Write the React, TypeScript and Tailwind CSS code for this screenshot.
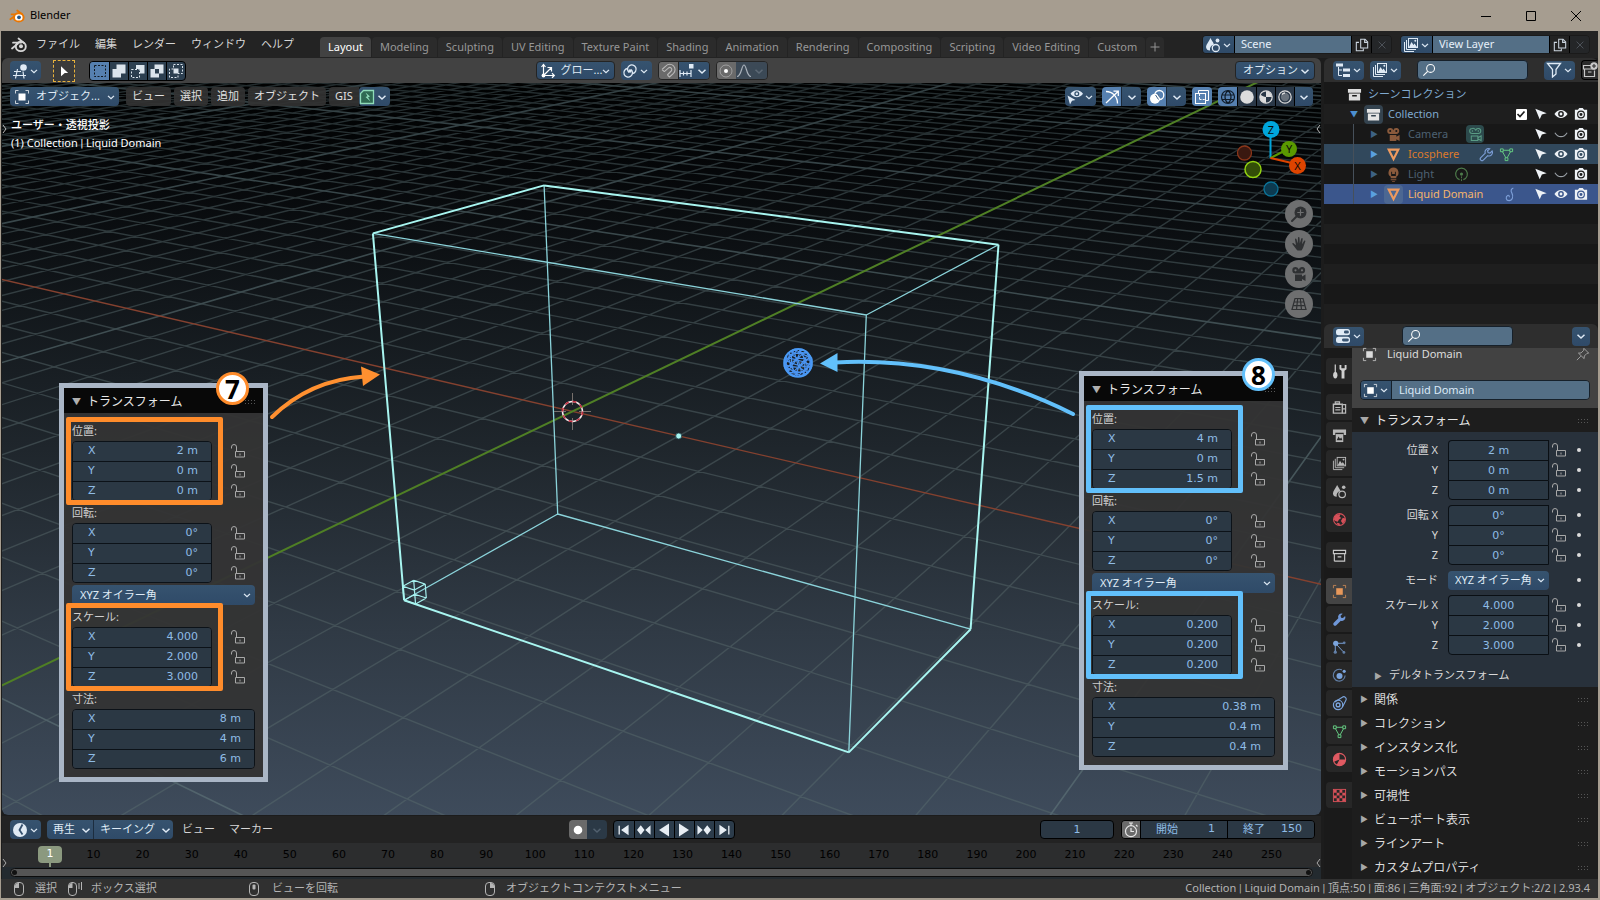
import React from "react";
import type { ReactNode } from "react";

/* ------------------------------------------------------------------ */
/* Camera and scene geometry                                           */
/* ------------------------------------------------------------------ */

type Vec3 = [number, number, number];
type Pt = [number, number];

const CAMERA = [
  [37.629, 58.012, -11.218, 572.423],
  [2.301, -5.006, -66.449, 411.376],
  [-0.022897, 0.033316, -0.015793, 1],
];

const row = (r: number[], p: Vec3) => r[0] * p[0] + r[1] * p[1] + r[2] * p[2] + r[3];
const project = (p: Vec3): Pt => {
  const w = row(CAMERA[2], p);
  return [row(CAMERA[0], p) / w, row(CAMERA[1], p) / w];
};

function floorLine(axis: "x" | "y", k: number): [Pt, Pt] | null {
  const at = (t: number): Vec3 => (axis === "x" ? [k, t, 0] : [t, k, 0]);
  const reach = 140;
  let lo = -reach;
  let hi = reach;
  while (lo < hi && row(CAMERA[2], at(lo)) < 0.08) lo += 0.25;
  while (hi > lo && row(CAMERA[2], at(hi)) < 0.08) hi -= 0.25;
  return lo < hi ? [project(at(lo)), project(at(hi))] : null;
}

const pathOf = (segments: ([Pt, Pt] | null)[]) =>
  segments
    .filter((s): s is [Pt, Pt] => s !== null)
    .map(([a, b]) => `M${a[0].toFixed(1)} ${a[1].toFixed(1)}L${b[0].toFixed(1)} ${b[1].toFixed(1)}`)
    .join("");

const GRID = Array.from({ length: 161 }, (_, i) => i - 80);
const minorPath = pathOf(
  GRID.filter((k) => k % 10 !== 0).flatMap((k) => [floorLine("x", k), floorLine("y", k)]),
);
const majorPath = pathOf(
  GRID.filter((k) => k % 10 === 0 && k !== 0).flatMap((k) => [floorLine("x", k), floorLine("y", k)]),
);
const xAxisPath = pathOf([floorLine("y", 0)]);
const yAxisPath = pathOf([floorLine("x", 0)]);

function boxEdges(min: Vec3, max: Vec3) {
  const c = (i: number): Vec3 => [i & 1 ? max[0] : min[0], i & 2 ? max[1] : min[1], i & 4 ? max[2] : min[2]];
  const edges: Record<string, [Pt, Pt]> = {};
  for (let i = 0; i < 8; i++)
    for (const b of [1, 2, 4]) if (!(i & b)) edges[`${i}-${i | b}`] = [project(c(i)), project(c(i | b))];
  return edges;
}

const domain = boxEdges([-2, -2, -3], [6, 2, 3]);
const OUTLINE = ["0-1", "1-3", "0-4", "3-7", "4-6", "6-7"];
const outlinePath = pathOf(OUTLINE.map((k) => domain[k]));
const innerPath = pathOf(Object.keys(domain).filter((k) => !OUTLINE.includes(k)).map((k) => domain[k]));
const cellPath = pathOf(Object.values(boxEdges([-2, -2, -3], [-1.75, -1.75, -2.75])));

function icosphere(center: Vec3, radius: number) {
  const t = (1 + Math.sqrt(5)) / 2;
  const base: Vec3[] = [];
  for (const a of [-1, 1]) for (const b of [-t, t]) base.push([0, a, b], [a, b, 0], [b, 0, a]);
  const dist = (p: Vec3, q: Vec3) => Math.hypot(p[0] - q[0], p[1] - q[1], p[2] - q[2]);
  const unit = (p: Vec3): Vec3 => {
    const l = Math.hypot(...p);
    return [p[0] / l, p[1] / l, p[2] / l];
  };
  const verts = base.map(unit);
  for (let i = 0; i < 12; i++)
    for (let j = i + 1; j < 12; j++)
      if (dist(base[i], base[j]) < 2.1)
        verts.push(unit([base[i][0] + base[j][0], base[i][1] + base[j][1], base[i][2] + base[j][2]]));
  const edges: [Pt, Pt][] = [];
  const place = (p: Vec3) => project([center[0] + p[0] * radius, center[1] + p[1] * radius, center[2] + p[2] * radius]);
  for (let i = 0; i < verts.length; i++)
    for (let j = i + 1; j < verts.length; j++)
      if (dist(verts[i], verts[j]) < 0.7) edges.push([place(verts[i]), place(verts[j])]);
  return pathOf(edges);
}
const spherePath = icosphere([4, 0, 1.5], 0.2);

/* ------------------------------------------------------------------ */
/* Icons (16 x 16 drawing area)                                        */
/* ------------------------------------------------------------------ */

const objectShape = (
  <>
    <rect x="4.5" y="4.5" width="7" height="7" fill="currentColor" />
    <path d="M1.5 4.5v-3h3M11.5 1.5h3v3M14.5 11.5v3h-3M4.5 14.5h-3v-3" fill="none" stroke="currentColor" opacity=".75" />
  </>
);
const movieCamera = (
  <>
    <path d="M4.500 1a3.200 3.200 0 1 0 0 6.400h6.500a3.200 3.200 0 1 0-3.200-3.900A3.200 3.200 0 0 0 4.500 1zM4.500 3.200a1.100 1.100 0 1 1 0 2.200 1.100 1.100 0 0 1 0-2.200zM11 3.200a1.100 1.100 0 1 1 0 2.200 1.100 1.100 0 0 1 0-2.200z" fill="currentColor" fillRule="evenodd" />
    <path d="M4 8.500h7v2l3.500-2v6.500l-3.500-2v2H4z" fill="currentColor" />
  </>
);
const wrench = "M14 4.300l-2.300 2.200-2-.5-.6-2L11.400 1.800A3.700 3.700 0 0 0 6.700 6.600L1.900 11.400a1.900 1.900 0 0 0 2.700 2.700L9.400 9.300A3.700 3.700 0 0 0 14 4.300z";
const meshPath = (
  <>
    <path d="M4.500 3.500h7M3.700 5l3.600 6.500M12.300 5L8.700 11.500" fill="none" stroke="currentColor" />
    <path d="M1.500 2h3v3h-3zM11.500 2h3v3h-3zM6.500 11.500h3v3h-3z" fill="none" stroke="currentColor" />
  </>
);
const sceneShape = (
  <>
    <path d="M5.500 1C4 4.500 1 7.500 1 10a4 4 0 0 0 4 3.500A5.500 5.500 0 0 1 9 7.500C8.300 5 6.500 3.500 5.500 1z" fill="currentColor" />
    <circle cx="12.500" cy="3.500" r="1.900" fill="currentColor" />
    <circle cx="10.800" cy="11" r="3.500" fill="none" stroke="currentColor" strokeWidth="1.300" />
  </>
);
const layerShape = (
  <>
    <path d="M1.500 5v9.500H11M3.500 3v9.500H13" fill="none" stroke="currentColor" />
    <rect x="5.500" y="1.500" width="9" height="9" fill="none" stroke="currentColor" />
    <path d="M6 10l2.500-5 2 3 1-1.500L14 10z" fill="currentColor" />
    <circle cx="12.300" cy="3.800" r="1" fill="currentColor" />
  </>
);

const ICONS: Record<string, ReactNode> = {
  chevron: <path d="M4 6.500l4 3.800 4-3.800" fill="none" stroke="currentColor" strokeWidth="1.700" />,
  object: objectShape,
  scene: sceneShape,
  layers: layerShape,
  blenderLogo: (
    <>
      <path d="M7.500 1.500L13 6M2 5.700h8M1 11.500L7 6.500" fill="none" stroke="currentColor" strokeWidth="1.700" strokeLinecap="round" />
      <ellipse cx="9.800" cy="9.400" rx="5" ry="4.700" fill="none" stroke="currentColor" strokeWidth="1.900" />
      <circle cx="10" cy="9.300" r="2" fill="currentColor" />
    </>
  ),
  editor3d: (
    <>
      <path d="M2 8.500h7M1 12.500h13M5.500 6L3.500 15.500M11 8.500l1 7" fill="none" stroke="currentColor" strokeWidth="1.200" />
      <circle cx="11.500" cy="4.500" r="3.300" fill="currentColor" />
    </>
  ),
  cursor: <path d="M4 1.500l9.500 9-4.500.3L4 15z" fill="currentColor" />,
  toggleArrow: <path d="M1.500 2l13 5-5.500 1.700L6.500 14z" fill="currentColor" />,
  selSet: <rect x="2.500" y="2.500" width="11" height="11" fill="none" stroke="#101820" strokeDasharray="2 1.500" />,
  selExtend: <path d="M5.500 1.500h9v9H10v4H1.500V6h4z" fill="currentColor" />,
  selSubtract: (
    <>
      <path d="M6 2h8.500v8.500H10V6H6z" fill="currentColor" />
      <path d="M1.500 6.500h8v8h-8z" fill="none" stroke="currentColor" strokeDasharray="2 1.500" />
    </>
  ),
  selInvert: <path d="M5.500 1.500h9v9H10v4H1.500V6h4zM6 6v4.500h4V6z" fill="currentColor" fillRule="evenodd" />,
  selIntersect: (
    <>
      <path d="M5.500 1.500h9v9H10v4H1.500V6h4z" fill="none" stroke="currentColor" strokeDasharray="2 1.500" />
      <path d="M5.500 5.500h5v5h-5z" fill="currentColor" />
    </>
  ),
  orientation: (
    <>
      <path d="M3.500 12V1.500M1.500 4L3.500 1.500 5.500 4M3.500 12.500h11M12 10.300l2.300 2.200-2.300 2.200M4.500 11.500L11 5M7.500 4.500H11.500V8.500" fill="none" stroke="currentColor" strokeWidth="1.200" />
      <circle cx="3.500" cy="12.500" r="1.900" fill="currentColor" />
    </>
  ),
  pivot: (
    <>
      <path d="M7 9.500A4.300 4.300 0 1 1 10.500 10.500" fill="none" stroke="currentColor" strokeWidth="1.300" />
      <path d="M9 6.500A4.300 4.300 0 1 1 5.500 5.500" fill="none" stroke="currentColor" strokeWidth="1.300" />
      <circle cx="8" cy="8" r="1.700" fill="currentColor" />
    </>
  ),
  magnet: (
    <path d="M2 6.500L6 2.800a5.300 5.300 0 0 1 7.500 7.500L9.500 14M4.300 8.700l4-3.600a2 2 0 0 1 2.900 2.900L7.300 12M2 6.500l2.300 2.200M7.300 12l2.200 2" fill="none" stroke="currentColor" strokeWidth="1.100" />
  ),
  increment: (
    <>
      <path d="M0.500 10.500h12M1 7v7M4.500 8.500v4M8 8.500v4M12 7v7" fill="none" stroke="currentColor" strokeWidth="1.200" />
      <rect x="10" y="1" width="4.500" height="4.500" fill="currentColor" />
    </>
  ),
  proportional: (
    <>
      <circle cx="8" cy="8" r="6" fill="none" stroke="currentColor" opacity=".35" />
      <circle cx="8" cy="8" r="2" fill="currentColor" />
    </>
  ),
  falloff: <path d="M1 13.500C5.500 13.500 5.500 2 8 2s2.500 11.500 7 11.500" fill="none" stroke="currentColor" strokeWidth="1.200" />,
  gis: (
    <>
      <path d="M4.500 1.500h10v13h-13v-10z" fill="#2f6a52" stroke="#8fdcb8" strokeWidth="1.300" />
      <path d="M6.500 3.500l4.500 4-2 .8 2.500 4.200-5-4.500 2-.7z" fill="#8fdcb8" />
    </>
  ),
  visibility: (
    <>
      <path d="M3.500 4.800C6.500 0 13 0 16 4.800 13 9.300 6.500 9.300 3.500 4.800zM9.800 2.200a2.500 2.500 0 1 0 0 5 2.500 2.500 0 0 0 0-5zM9.800 3.500a1.200 1.200 0 1 1 0 2.400 1.200 1.200 0 0 1 0-2.400z" fill="currentColor" fillRule="evenodd" />
      <path d="M0.500 6.500l8 4.500-3.500.7L3 15.500z" fill="currentColor" />
    </>
  ),
  gizmo: (
    <path d="M2 2.500C8.500 2.500 13.500 7.500 13.500 14.500M2 14L14 2.500M9.500 2.200h4.800V7" fill="none" stroke="currentColor" strokeWidth="1.300" />
  ),
  overlays: (
    <>
      <circle cx="6" cy="9.700" r="5" fill="currentColor" />
      <circle cx="10.300" cy="6" r="4.500" fill="none" stroke="currentColor" strokeWidth="1.300" />
      <path d="M6.500 6l3 4.500M8.500 4.500l2.300 4" stroke="#45658a" />
    </>
  ),
  xray: (
    <>
      <rect x="1.500" y="4.500" width="10" height="10" fill="none" stroke="currentColor" />
      <path d="M4.500 4V1.500h10v10H12" fill="none" stroke="currentColor" />
      <path d="M5.500 5v6M5.500 10.500h6" fill="none" stroke="currentColor" strokeDasharray="2 1.200" />
    </>
  ),
  wire: (
    <path d="M8 1.500a6.500 6.500 0 1 0 0 13 6.500 6.500 0 0 0 0-13zM2 6h12M2 10.500h12M8 1.500c-4 3.500-4 9.500 0 13M8 1.500c4 3.500 4 9.500 0 13" fill="none" stroke="#101c2a" strokeWidth="1.200" />
  ),
  solid: <circle cx="8" cy="8" r="6.800" fill="currentColor" />,
  material: (
    <>
      <circle cx="8" cy="8" r="6.200" fill="none" stroke="currentColor" strokeWidth="1.200" />
      <path d="M8 2v6h6A6 6 0 0 0 8 2zM8 8v6A6 6 0 0 1 2.500 5.500C4 7 6 8 8 8z" fill="currentColor" />
    </>
  ),
  rendered: (
    <>
      <circle cx="8" cy="8" r="6.200" fill="none" stroke="currentColor" strokeWidth="1.200" />
      <circle cx="8" cy="8" r="4.200" fill="currentColor" opacity=".35" />
      <path d="M5 5.500A4 4 0 0 1 8 4" fill="none" stroke="currentColor" strokeWidth="1.300" />
    </>
  ),
  copy: (
    <>
      <path d="M6.500 1.500h5l3 3v7h-8z" fill="none" stroke="currentColor" strokeWidth="1.200" />
      <path d="M11 1.500V5h3.500M4.500 5h-3v9.500h8V12" fill="none" stroke="currentColor" strokeWidth="1.200" />
    </>
  ),
  close: <path d="M3.500 3.500l9 9M12.500 3.500l-9 9" stroke="currentColor" />,
  plus: <path d="M8 2v12M2 8h12" stroke="currentColor" strokeWidth="1.300" />,
  outliner: (
    <>
      <path d="M1 1.500h7v3H1zM8 6.500h7v3H8zM8 12h7v3H8z" fill="currentColor" />
      <path d="M3.500 5v8.500H7M3.500 8H7" fill="none" stroke="currentColor" />
    </>
  ),
  search: (
    <>
      <circle cx="9.800" cy="6.200" r="4.500" fill="none" stroke="currentColor" strokeWidth="1.200" />
      <path d="M6.500 9.500L1.500 14.500" stroke="currentColor" strokeWidth="1.300" />
    </>
  ),
  filter: <path d="M1.500 1.500h13L10 7.500v4.500l-3.500 3V7.500z" fill="none" stroke="currentColor" strokeWidth="1.300" />,
  newCollection: (
    <>
      <path d="M9 3.500H1.500v3.500H13M2.500 7v7.500h10V8.500M6 10h3.500" fill="none" stroke="currentColor" strokeWidth="1.200" />
      <circle cx="12" cy="4" r="3.700" fill="currentColor" />
      <path d="M12 2v4M10 4h4" stroke="#2b2b2b" strokeWidth="1.100" />
    </>
  ),
  collection: (
    <path d="M1 2h14v4H1zM2 7h12v7.500H2zM5.500 8.500v1.500h5V8.500z" fill="currentColor" fillRule="evenodd" />
  ),
  collectionLine: <path d="M1.500 2.500h13v3.500h-13zM2.500 6h11v8h-11M2.500 6v8M6 9.500h4" fill="none" stroke="currentColor" strokeWidth="1.200" />,
  movie: movieCamera,
  cameraData: (
    <>
      <path d="M4.500 1.500a2.700 2.700 0 1 0 0 5.400h6.500a2.700 2.700 0 1 0-2.700-3.200A3.300 3.300 0 0 0 4.500 1.500zM3.500 9.500h7v5h-7zM10.500 11.500l3.500-2v5l-3.500-2" fill="none" stroke="currentColor" strokeWidth="1.100" />
      <circle cx="4.700" cy="4.200" r=".8" fill="currentColor" />
      <circle cx="11" cy="4.200" r=".8" fill="currentColor" />
    </>
  ),
  meshTri: <path d="M1 1.500h14L8 15.500zM4.800 4L8 10.500 11.200 4z" fill="currentColor" fillRule="evenodd" />,
  wrenchLine: <path d={wrench} fill="none" stroke="currentColor" strokeWidth="1.200" />,
  wrench: <path d={wrench} fill="currentColor" />,
  mesh: meshPath,
  light: (
    <path d="M8 .5a5.500 5.500 0 0 0-3 10V12h6v-1.500A5.500 5.500 0 0 0 8 .5zM5.500 5h1v2.500h3V5h1v4.500h-5zM5 13h6v1H5zM6.500 14.800h3v1h-3z" fill="currentColor" fillRule="evenodd" />
  ),
  lightData: (
    <>
      <path d="M6 13.500A6.300 6.300 0 1 1 10 13.500" fill="none" stroke="currentColor" strokeWidth="1.200" />
      <circle cx="8" cy="7.500" r="1.700" fill="currentColor" />
      <path d="M8 10v5.500" stroke="currentColor" strokeDasharray="2 1" />
    </>
  ),
  fluid: <path d="M11 1C8.500 2 8 4 9.500 6.500c2 3.500.5 8-3 8-3.500 0-4-4-1.500-5.500 1-.5 2.200.5 1.500 1.800" fill="none" stroke="currentColor" strokeWidth="1.200" />,
  eye: (
    <path d="M0.500 8C4.500 2 11.500 2 15.500 8 11.500 14 4.500 14 .5 8zM8 4.700a3.300 3.300 0 1 0 0 6.600 3.300 3.300 0 0 0 0-6.600zM8 6.400a1.600 1.600 0 1 1 0 3.200 1.600 1.600 0 0 1 0-3.200z" fill="currentColor" fillRule="evenodd" />
  ),
  eyeClosed: <path d="M1 6.500C4.500 12.500 11.500 12.500 15 6.500" fill="none" stroke="currentColor" strokeWidth="1.200" />,
  photo: (
    <path d="M1 3h3.500L6 1h4l1.500 2H15v11.500H1zM8 4a4.500 4.500 0 1 0 0 9 4.500 4.500 0 0 0 0-9zM8 5.300a3.200 3.200 0 1 1 0 6.400 3.200 3.200 0 0 1 0-6.400zM8 6.800a1.700 1.700 0 1 0 0 3.400 1.700 1.700 0 0 0 0-3.400z" fill="currentColor" fillRule="evenodd" />
  ),
  properties: (
    <>
      <rect x="1" y="1" width="14" height="6.200" rx="2.500" fill="currentColor" />
      <rect x="1" y="8.800" width="14" height="6.200" rx="2.500" fill="currentColor" />
      <rect x="9" y="2.600" width="4.800" height="3" rx="1.400" fill="#3b5673" />
      <rect x="7" y="10.400" width="6.800" height="3" rx="1.400" fill="#3b5673" />
    </>
  ),
  pin: <path d="M9 1.500l5.500 5.500-2 .3-3 3-.2 3L2.800 7l3-.2 3-3zM5.500 10.500L1 15" fill="none" stroke="currentColor" strokeWidth="1.100" />,
  tool: (
    <>
      <path d="M3.500 0.500v9" stroke="currentColor" strokeWidth="1.300" />
      <path d="M3.500 8.500c2 0 2.300 2 2.300 3.500s-.8 3.500-2.300 3.500S1.200 13.500 1.200 12s.3-3.500 2.300-3.500z" fill="currentColor" />
      <path d="M8 1v4.500l2.200 1.800v8.200h3.100V7.300l2.200-1.800V1l-2 0v3.500h-3.500V1z" fill="currentColor" />
    </>
  ),
  render: (
    <>
      <path d="M1.500 4.500h9.500v9.500H1.500z" fill="none" stroke="currentColor" strokeWidth="1.500" />
      <path d="M11 5h3.500v9H11M3.500 2h4.500v2H3.500zM3.500 8h5.500M3.500 10.500h5.500M11.500 9.500h3" fill="none" stroke="currentColor" strokeWidth="1.300" />
    </>
  ),
  output: (
    <>
      <path d="M1 1.500h14v6h-2.500V5h-9v2.500H1z" fill="currentColor" />
      <path d="M4 6.500h8v8.500H4z" fill="currentColor" />
      <path d="M5 13l2-4 1.500 2.500L10 10l1 3z" fill="#282828" />
    </>
  ),
  world: (
    <>
      <circle cx="8" cy="8" r="6.300" fill="none" stroke="currentColor" strokeWidth="1.200" />
      <path d="M2.500 5c2-2.500 5.500-3 6.500-2.500l-1 2.500 2 1.500-2.500 1.500L6 10.500 3.500 9.500 2 8zM11.500 6l2.500 1c.3 2.500-1 4.500-2.500 5.500L9.500 9.500zM5 11.500l3 .5.500 2.500-2.500-1z" fill="currentColor" />
    </>
  ),
  particles: (
    <>
      <path d="M4 3.500h8M3.500 5v7M5 5l7 7.500" stroke="currentColor" />
      <circle cx="4" cy="3.500" r="2.800" fill="currentColor" />
      <circle cx="13" cy="3" r="1.500" fill="currentColor" opacity=".7" />
      <circle cx="3.500" cy="13" r="1.700" fill="currentColor" opacity=".7" />
      <circle cx="12.700" cy="13.200" r="1.500" fill="currentColor" opacity=".7" />
    </>
  ),
  physics: (
    <>
      <path d="M10.500 2A6.300 6.300 0 1 0 14 8" fill="none" stroke="currentColor" strokeWidth="1.200" opacity=".7" />
      <circle cx="8" cy="8.500" r="3.200" fill="currentColor" />
      <circle cx="13" cy="3.500" r="1.700" fill="currentColor" />
    </>
  ),
  constraint: (
    <>
      <path d="M3 6.500L11 1.300a2.600 2.600 0 0 1 3.700 3.500L11 12" fill="none" stroke="currentColor" strokeWidth="1.200" />
      <circle cx="6.500" cy="9.500" r="5" fill="none" stroke="currentColor" strokeWidth="1.300" />
      <circle cx="6.500" cy="9.500" r="2" fill="none" stroke="currentColor" strokeWidth="1.500" />
    </>
  ),
  materialBall: (
    <>
      <circle cx="8" cy="8" r="6.500" fill="none" stroke="currentColor" strokeWidth="1.200" />
      <path d="M8 1.500A6.500 6.500 0 0 0 2 10.500L8 8zM8 8l6.500 0A6.500 6.500 0 0 1 5 13.700z" fill="currentColor" />
    </>
  ),
  checker: (
    <>
      <rect x="1.500" y="1.500" width="13" height="13" fill="none" stroke="currentColor" />
      <path d="M2 2h3v3H2zM8 2h3v3H8zM5 5h3v3H5zM11 5h3v3h-3zM2 8h3v3H2zM8 8h3v3H8zM5 11h3v3H5zM11 11h3v3h-3z" fill="currentColor" />
    </>
  ),
  unlock: (
    <path d="M1.500 5.500V4a2.500 2.500 0 0 1 5 0v4.500M5.500 8.500h9v5.500h-9zM10 10.500v2" fill="none" stroke="currentColor" />
  ),
  clock: (
    <>
      <circle cx="8" cy="8" r="7" fill="currentColor" />
      <path d="M10.500 2.500L7.500 8l3 4.500" fill="none" stroke="#34506e" strokeWidth="1.800" />
    </>
  ),
  record: <circle cx="8" cy="8" r="4.300" fill="currentColor" />,
  first: <path d="M2.500 3v10M12.500 3.500v9L6 8z" fill="currentColor" stroke="currentColor" strokeWidth="1.500" />,
  prevKey: <path d="M0 8l4.300-5.500L8.600 8l-4.300 5.500zM15.500 2.500v11L9.500 8z" fill="currentColor" />,
  playBack: <path d="M13 1.500v13L3 8z" fill="currentColor" />,
  play: <path d="M3 1.500v13L13 8z" fill="currentColor" />,
  nextKey: <path d="M16 8l-4.300-5.500L7.400 8l4.300 5.500zM.5 2.500v11L6.500 8z" fill="currentColor" />,
  last: <path d="M13.500 3v10M3.500 3.500v9L10 8z" fill="currentColor" stroke="currentColor" strokeWidth="1.500" />,
  stopwatch: (
    <>
      <circle cx="8" cy="9.200" r="5.500" fill="none" stroke="currentColor" strokeWidth="1.200" />
      <path d="M8 6v3.500h3M6 1h4M8 1v2.500M13 3l1.500 1.500" fill="none" stroke="currentColor" strokeWidth="1.200" />
    </>
  ),
  mouseLeft: (
    <>
      <path d="M3.500 5a3.500 3.500 0 0 1 3.500-3.500h2A3.500 3.500 0 0 1 12.500 5v6A3.500 3.500 0 0 1 9 14.500H7A3.500 3.500 0 0 1 3.500 11z" fill="none" stroke="currentColor" />
      <path d="M4 7V4.500A3 3 0 0 1 7 2h1v5z" fill="currentColor" />
    </>
  ),
  mouseDrag: (
    <>
      <path d="M1.500 5A3.500 3.500 0 0 1 5 1.500h1A3.500 3.500 0 0 1 9.500 5v6A3.500 3.500 0 0 1 6 14.500H5A3.500 3.500 0 0 1 1.500 11zM12 2v6M14.500 1v8" fill="none" stroke="currentColor" />
      <path d="M2 7V4.500A3 3 0 0 1 5 2h.5v5z" fill="currentColor" />
    </>
  ),
  mouseMiddle: (
    <>
      <path d="M3.500 5a3.500 3.500 0 0 1 3.500-3.500h2A3.500 3.500 0 0 1 12.500 5v6A3.500 3.500 0 0 1 9 14.500H7A3.500 3.500 0 0 1 3.500 11z" fill="none" stroke="currentColor" />
      <rect x="6.500" y="3.500" width="3" height="5" rx="1" fill="currentColor" />
    </>
  ),
  mouseRight: (
    <>
      <path d="M3.500 5a3.500 3.500 0 0 1 3.500-3.500h2A3.500 3.500 0 0 1 12.500 5v6A3.500 3.500 0 0 1 9 14.500H7A3.500 3.500 0 0 1 3.500 11z" fill="none" stroke="currentColor" />
      <path d="M12 7V4.500A3 3 0 0 0 9 2H8v5z" fill="currentColor" />
    </>
  ),
  zoom: (
    <>
      <circle cx="9.500" cy="6.500" r="6" fill="currentColor" />
      <path d="M6 10L1 15" stroke="currentColor" strokeWidth="2" strokeLinecap="round" />
      <path d="M9.500 3.300v6.400M6.300 6.500h6.400" stroke="#6e6f70" strokeWidth="1.200" />
    </>
  ),
  hand: (
    <path d="M5.500 13.500L1.500 8.200c-.5-1 .5-1.500 1.300-.8L5 9.300 4 3.500c-.1-1.100 1.200-1.200 1.500-.2L6.700 7.500 7 1.800c0-1.100 1.400-1.100 1.500 0l.3 5.700L10.300 2.600c.3-1 1.500-.7 1.400.3l-.7 5.300 2-3.300c.6-.8 1.700-.2 1.300.7L12 12l-1.500 2.500H6.500z" fill="currentColor" />
  ),
  perspective: (
    <path d="M4 2.500h8l3 11H1zM2.800 6h10.400M2 9.700h12M6.700 2.500L5.500 13.500M9.300 2.500l1.200 11" fill="none" stroke="currentColor" strokeWidth="1.200" />
  ),
};

function Icon({ name, className = "size-4" }: { name: string; className?: string }) {
  return (
    <svg viewBox="0 0 16 16" className={`shrink-0 ${className}`} aria-hidden="true">
      {ICONS[name]}
    </svg>
  );
}

/* ------------------------------------------------------------------ */
/* Shared controls                                                     */
/* ------------------------------------------------------------------ */

const BLUE = "bg-linear-to-b from-[#36536f] to-[#2f4a68] text-[#dfeaf5]";

function EditorButton({ icon, label }: { icon: string; label: string }) {
  return (
    <button aria-label={label} className={`flex h-[19px] w-[31px] shrink-0 items-center justify-center rounded ${BLUE}`}>
      <Icon name={icon} />
      <Icon name="chevron" className="size-3" />
    </button>
  );
}

function Dropdown({ label, value, className }: { label: string; value: string; className: string }) {
  return (
    <div className={`relative flex items-center ${BLUE} ${className}`}>
      <select aria-label={label} className="h-full w-full appearance-none bg-transparent pr-2 outline-none">
        <option>{value}</option>
      </select>
      <Icon name="chevron" className="pointer-events-none absolute right-0.5 size-3" />
    </div>
  );
}

function Search({ label, className }: { label: string; className: string }) {
  return (
    <label className={`flex h-5 items-center rounded border border-[#16202a] bg-[#546f86] px-1 text-white ${className}`}>
      <Icon name="search" className="size-3.5" />
      <input aria-label={label} className="w-full min-w-0 bg-transparent outline-none" />
    </label>
  );
}

const Bar = () => <span className="font-[Roboto,sans-serif]"> | </span>;

const FIELD = "min-w-0 bg-[#2b3844] font-[DejaVu_Sans,sans-serif] text-[#8fbce6] outline-none";

/* ------------------------------------------------------------------ */
/* Top bar                                                             */
/* ------------------------------------------------------------------ */

const TABS = [
  "Layout", "Modeling", "Sculpting", "UV Editing", "Texture Paint", "Shading",
  "Animation", "Rendering", "Compositing", "Scripting", "Video Editing", "Custom",
];

function TitleBar() {
  return (
    <header className="flex h-[31px] items-center bg-[#a69d90] text-black">
      <svg viewBox="0 0 16 16" className="ml-2 size-4" aria-hidden="true">
        <path d="M8.200 2.500l5 3.800M2.500 6.300h7M1.300 11.300L8 6.500" fill="none" stroke="#ea7600" strokeWidth="1.700" strokeLinecap="round" />
        <ellipse cx="9.800" cy="9.400" rx="4.800" ry="4.200" fill="#fff" stroke="#ea7600" strokeWidth="2" />
        <circle cx="10" cy="9.300" r="1.900" fill="#265787" />
      </svg>
      <h1 className="ml-[5px] flex-1">Blender</h1>
      <button aria-label="最小化" className="flex h-full w-[45px] items-center justify-center">
        <svg viewBox="0 0 12 12" className="size-3" aria-hidden="true"><path d="M1 6.500h10" stroke="#000" /></svg>
      </button>
      <button aria-label="最大化" className="flex h-full w-[45px] items-center justify-center">
        <svg viewBox="0 0 12 12" className="size-3" aria-hidden="true"><path d="M1.500 1.500h9v9h-9z" fill="none" stroke="#000" /></svg>
      </button>
      <button aria-label="閉じる" className="flex h-full w-[45px] items-center justify-center">
        <svg viewBox="0 0 12 12" className="size-3" aria-hidden="true"><path d="M1 1l10 10M11 1L1 11" stroke="#000" /></svg>
      </button>
    </header>
  );
}

function DataBlock({ icon, label, value }: { icon: string; label: string; value: string }) {
  return (
    <div className="flex h-[19px] w-[190px] overflow-hidden rounded border border-[#1a1a1a]">
      <button aria-label={`${label}の一覧`} className={`flex w-[31px] items-center justify-center ${BLUE}`}>
        <Icon name={icon} />
        <Icon name="chevron" className="size-3" />
      </button>
      <input aria-label={label} defaultValue={value} className="w-0 flex-1 border-l border-black bg-[#546f86] pl-1.5 text-[#e6f0fa] outline-none" />
      <button aria-label={`${label}を複製`} className="flex w-5 items-center justify-center border-l border-black bg-[#222] text-[#ccd6e0]">
        <Icon name="copy" className="size-3.5" />
      </button>
      <button aria-label={`${label}を解除`} className="flex w-5 items-center justify-center border-l border-black bg-[#242628] text-[#5a6068]">
        <Icon name="close" className="size-3" />
      </button>
    </div>
  );
}

function TopBar() {
  return (
    <div className="flex h-[27px] items-center gap-2 bg-[#232323] pr-2 pl-2.5 text-[#d6d6d6]">
      <button aria-label="Blender" className="flex"><Icon name="blenderLogo" /></button>
      <nav className="ml-px flex gap-[15px]">
        {["ファイル", "編集", "レンダー", "ウィンドウ", "ヘルプ"].map((m) => (
          <button key={m} className="whitespace-nowrap">{m}</button>
        ))}
      </nav>
      <div className="ml-[18px] flex h-full flex-1 items-end gap-px pb-px">
        {TABS.map((t, i) => (
          <button
            key={t}
            className={`h-5 rounded-t px-2 whitespace-nowrap ${i === 0 ? "bg-[#424242] text-white" : "bg-[#2b2b2b] text-[#979797]"}`}
          >
            {t}
          </button>
        ))}
        <button aria-label="ワークスペースを追加" className="flex h-5 w-[18px] items-center justify-center rounded-t bg-[#2b2b2b] text-[#979797]">
          <Icon name="plus" className="size-3" />
        </button>
      </div>
      <DataBlock icon="scene" label="シーン" value="Scene" />
      <DataBlock icon="layers" label="ビューレイヤー" value="View Layer" />
    </div>
  );
}

/* ------------------------------------------------------------------ */
/* 3D viewport                                                         */
/* ------------------------------------------------------------------ */

function ToolHeader() {
  return (
    <div className="flex h-[25px] items-center rounded-t-md bg-[#424242] pr-1.5 pl-2">
      <div className="flex flex-1 items-center">
        <EditorButton icon="editor3d" label="エディタータイプ" />
        <button aria-label="ボックス選択" className="ml-3 flex size-[22px] items-center justify-center border border-dashed border-[#e8b23c] bg-[#3a3a3a] text-white">
          <Icon name="cursor" className="size-3" />
        </button>
        <div className="ml-3.5 flex h-5 overflow-hidden rounded border border-black bg-[#2c3f50] text-[#dbe4ec]">
          {["selSet", "selExtend", "selSubtract", "selInvert", "selIntersect"].map((n, i) => (
            <button
              key={n}
              aria-label={`選択モード ${i + 1}`}
              className={`flex w-[19px] items-center justify-center ${i === 0 ? "bg-[#5680b0]" : "border-l border-black"}`}
            >
              <Icon name={n} />
            </button>
          ))}
        </div>
      </div>
      <div className="mr-[22px] flex items-center gap-1.5">
        <div className="relative">
          <Dropdown label="トランスフォーム座標系" value="グロー..." className="h-[19px] w-[79px] rounded border border-[#242424] [&>select]:pl-6" />
          <Icon name="orientation" className="pointer-events-none absolute top-0.5 left-1 size-4 text-white" />
        </div>
        <EditorButton icon="pivot" label="ピボットポイント" />
        <div className="flex h-[19px] overflow-hidden rounded border border-[#242424]">
          <button aria-label="スナップ" className="flex w-[19px] items-center justify-center bg-[#6a6a6a] text-[#b8b8b8]"><Icon name="magnet" /></button>
          <button aria-label="スナップ先" className={`flex w-[31px] items-center justify-center border-l border-[#242424] ${BLUE}`}>
            <Icon name="increment" />
            <Icon name="chevron" className="size-3.5" />
          </button>
        </div>
        <div className="flex h-[19px] overflow-hidden rounded border border-[#242424]">
          <button aria-label="プロポーショナル編集" className="flex w-[19px] items-center justify-center bg-[#6a6a6a] text-white"><Icon name="proportional" /></button>
          <button aria-label="減衰タイプ" className="flex w-[31px] items-center justify-center bg-[#3c4956] text-[#a9b1ba]">
            <Icon name="falloff" />
            <Icon name="chevron" className="size-3.5 opacity-30" />
          </button>
        </div>
      </div>
      <div className="flex flex-1 justify-end">
        <button className={`flex h-[19px] w-20 items-center justify-between rounded border border-[#242424] pr-0.5 pl-[7px] whitespace-nowrap ${BLUE}`}>
          オプション
          <Icon name="chevron" className="size-3.5" />
        </button>
      </div>
    </div>
  );
}

function SplitButton({ icon, label }: { icon: string; label: string }) {
  return (
    <div className="flex h-[19px] overflow-hidden rounded">
      <button aria-label={label} className="flex w-[19px] items-center justify-center bg-[#5680b0] text-white"><Icon name={icon} /></button>
      <button aria-label={`${label}の設定`} className={`flex w-5 items-center justify-center border-l border-[#1b2a3a] ${BLUE}`}>
        <Icon name="chevron" className="size-3.5" />
      </button>
    </div>
  );
}

function ViewportHeader() {
  return (
    <div className="relative flex items-center justify-between px-2 pt-1">
      <div className="flex items-center">
        <div className="relative">
          <Dropdown label="モード" value="オブジェク..." className="h-[19px] w-[109px] rounded [&>select]:pl-[26px]" />
          <Icon name="object" className="pointer-events-none absolute top-0.5 left-1 size-4 text-white" />
        </div>
        <nav className="ml-[7px] flex gap-[3px] text-[#e0e0e0]">
          {["ビュー", "選択", "追加", "オブジェクト"].map((m) => (
            <button key={m} className="h-[19px] rounded bg-[#333]/90 px-1.5 whitespace-nowrap">{m}</button>
          ))}
          <div className="flex">
            <button className="h-[19px] rounded-l bg-[#333]/90 px-1.5">GIS</button>
            <button aria-label="GIS ツール" className={`flex h-[19px] w-[31px] items-center justify-center rounded ${BLUE}`}>
              <Icon name="gis" />
              <Icon name="chevron" className="size-3.5" />
            </button>
          </div>
        </nav>
      </div>
      <div className="flex items-center gap-1.5">
        <EditorButton icon="visibility" label="オブジェクトの表示" />
        <SplitButton icon="gizmo" label="ギズモ" />
        <SplitButton icon="overlays" label="オーバーレイ" />
        <button aria-label="透過表示" className="flex h-[19px] w-5 items-center justify-center rounded bg-[#5680b0] text-white"><Icon name="xray" /></button>
        <div className="flex h-[19px] overflow-hidden rounded text-[#dcdcdc]">
          <button aria-label="ワイヤーフレーム" className="flex w-[19px] items-center justify-center bg-[#5680b0]"><Icon name="wire" /></button>
          {["solid", "material", "rendered"].map((n) => (
            <button key={n} aria-label={n} className="flex w-[19px] items-center justify-center border-l border-black bg-[#2a3848]"><Icon name={n} /></button>
          ))}
          <button aria-label="シェーディング設定" className={`flex w-[19px] items-center justify-center border-l border-black ${BLUE}`}>
            <Icon name="chevron" className="size-3.5" />
          </button>
        </div>
      </div>
    </div>
  );
}

function SceneDrawing() {
  return (
    <svg viewBox="2 83 1319 732" preserveAspectRatio="xMidYMid slice" className="absolute inset-0 h-full w-full" aria-label="3D ビュー">
      <defs>
        <linearGradient id="sky" gradientUnits="userSpaceOnUse" x1="0" y1="83" x2="0" y2="815">
          <stop offset="0" stopColor="#000101" />
          <stop offset=".12" stopColor="#050709" />
          <stop offset=".3" stopColor="#12171b" />
          <stop offset=".5" stopColor="#1f262c" />
          <stop offset=".75" stopColor="#303a45" />
          <stop offset="1" stopColor="#3e4b5b" />
        </linearGradient>
        <linearGradient id="minor" gradientUnits="userSpaceOnUse" x1="0" y1="83" x2="0" y2="815">
          <stop offset="0" stopColor="#222b2d" />
          <stop offset=".25" stopColor="#313c3f" />
          <stop offset=".6" stopColor="#3e4a4f" />
          <stop offset="1" stopColor="#4b5b64" />
        </linearGradient>
        <linearGradient id="major" gradientUnits="userSpaceOnUse" x1="0" y1="83" x2="0" y2="815">
          <stop offset="0" stopColor="#323f42" />
          <stop offset=".5" stopColor="#455559" />
          <stop offset="1" stopColor="#53656e" />
        </linearGradient>
      </defs>
      <rect x="-600" y="83" width="2600" height="732" fill="url(#sky)" />
      <g fill="none">
        <path d={minorPath} stroke="url(#minor)" strokeWidth="1.400" />
        <path d={majorPath} stroke="url(#major)" strokeWidth="1.600" />
        <path d={xAxisPath} stroke="#84412f" strokeWidth="1.400" />
        <path d={yAxisPath} stroke="#4f7f25" strokeWidth="2" />
        <path d={innerPath} stroke="#8bd3da" strokeWidth="1.300" />
        <path d={cellPath} stroke="#a6f0ee" strokeWidth="1.200" />
        <path d={outlinePath} stroke="#a8f5f0" strokeWidth="2" />
        <path d={spherePath} stroke="#4a93f0" strokeWidth="1.200" />
        <circle cx="798" cy="363" r="14" stroke="#4a9bf5" strokeWidth="1.500" />
        <path d="M572.500 393v12M572.500 418v12M554 411.500h12M579 411.500h12" stroke="#77706c" />
        <circle cx="572.500" cy="411.500" r="10" stroke="#f5e9e9" strokeWidth="1.500" />
        <circle cx="572.500" cy="411.500" r="10" stroke="#c2283c" strokeWidth="1.500" strokeDasharray="3.900 3.900" />
      </g>
      <circle cx="678.700" cy="436" r="3" fill="#a8f5f0" stroke="#24444c" strokeWidth=".8" />
      <path d="M272 417Q310 380 364 376.500" fill="none" stroke="#ff9030" strokeWidth="4" strokeLinecap="round" />
      <path d="M361 366.500L380 374.500 363 386z" fill="#ff9030" />
      <path d="M1073 414C1000 378 920 358 835 362.500" fill="none" stroke="#62c0fb" strokeWidth="4" strokeLinecap="round" />
      <path d="M820 363.500L837.500 353v19z" fill="#62c0fb" />
    </svg>
  );
}

function AxisGizmo() {
  return (
    <svg viewBox="0 0 80 80" className="size-20" aria-label="視点ギズモ">
      <path d="M40.500 38V10" stroke="#00a5dc" strokeWidth="2" />
      <path d="M40.500 38L58 29" stroke="#5a9900" strokeWidth="2" />
      <path d="M40.500 38L66 44" stroke="#dd4400" strokeWidth="2" />
      <circle cx="14.500" cy="33" r="7" fill="#3a1810" stroke="#8a3519" strokeWidth="1.300" />
      <circle cx="41" cy="69" r="7" fill="#0c3a50" stroke="#0b7398" strokeWidth="1.300" />
      <circle cx="41" cy="9.500" r="8.500" fill="#00a5dc" />
      <circle cx="59" cy="29" r="8" fill="#5a9900" />
      <circle cx="67.500" cy="45.500" r="8.500" fill="#dd4400" />
      <circle cx="23" cy="49.500" r="8" fill="#334e08" stroke="#93d311" strokeWidth="1.500" />
      <g fontSize="11" textAnchor="middle" fill="#0a0a0a">
        <text x="41" y="13.500">Z</text>
        <text x="59" y="33">Y</text>
        <text x="67.500" y="49.500">X</text>
      </g>
    </svg>
  );
}

type Section = { title: string; values: [string, string, string]; mark?: boolean; wide?: boolean };

function TransformCard({ number, accent, sections, className }: { number: string; accent: "orange" | "blue"; sections: Section[]; className: string }) {
  const tint = accent === "orange" ? "border-[#ff8c2b]" : "border-[#62c0fb]";
  const badge = accent === "orange" ? "-top-4 right-3.5" : "-top-4.5 right-2";
  return (
    <section className={`absolute w-[209px] border-[5px] border-[#aab6c6] bg-[#343434]/95 ${className}`}>
      <h2 className="flex h-[25px] items-center bg-[#080808] pt-0.5 pr-1.5 pl-2 text-xs text-[#e8e8e8]">
        <span className="mr-1.5 text-[9px] text-[#b0b0b0]">▼</span>
        トランスフォーム
        <Grip />
      </h2>
      <span className={`absolute flex size-[33px] items-center justify-center rounded-full border-[3px] bg-white text-[26px] leading-none font-bold text-black ${badge} ${tint}`}>
        {number}
      </span>
      <div className="flex flex-col gap-0.5 px-2 py-2">
        {sections.map((s, i) => (
          <React.Fragment key={s.title}>
            <div role="group" aria-label={s.title} className="relative">
              <p className="flex h-5 items-center text-[#cfcfcf]">{s.title}:</p>
              <div className="flex">
                <div className={`overflow-hidden rounded border border-[#0c1218] ${s.wide ? "w-full" : "w-[140px]"}`}>
                  {s.values.map((v, j) => (
                    <label key={j} className={`flex items-center bg-[#2b3844] pr-[13px] pl-[15px] font-[DejaVu_Sans,sans-serif] text-[#8fbce6] ${j === 0 ? "h-[19px]" : j === 1 ? "h-5 border-t border-[#0c1218]" : "h-[19px] border-t border-[#0c1218]"}`}>
                      {"XYZ"[j]}
                      <input defaultValue={v} className="w-full min-w-0 bg-transparent text-right outline-none" />
                    </label>
                  ))}
                </div>
                {!s.wide && (
                  <div className="ml-[18px] flex flex-col">
                    {s.values.map((_, j) => (
                      <button key={j} aria-label={`${s.title} ${"XYZ"[j]} をロック`} className="flex h-5 items-center text-[#a8a8a8]">
                        <Icon name="unlock" />
                      </button>
                    ))}
                  </div>
                )}
              </div>
              {s.mark && <span className={`pointer-events-none absolute -top-1 -bottom-1 -left-1.5 w-[157px] rounded-xs border-[5px] ${tint}`} />}
            </div>
            {i === 1 && <Dropdown label="回転モード" value="XYZ オイラー角" className="h-5 rounded-sm pl-2" />}
          </React.Fragment>
        ))}
      </div>
    </section>
  );
}

const NAV_BUTTONS: [string, string][] = [
  ["zoom", "ズーム"],
  ["hand", "移動"],
  ["movie", "カメラビュー"],
  ["perspective", "透視投影/平行投影"],
];

function Viewport() {
  return (
    <main className="relative flex-1 overflow-hidden rounded-b-md bg-black">
      <SceneDrawing />
      <ViewportHeader />
      <div className="relative mt-2.5 pl-[9px] leading-[18px] text-white">
        <p className="font-medium">ユーザー・透視投影</p>
        <p>(1) Collection<Bar />Liquid Domain</p>
      </div>
      <button aria-label="ツールバーを開く" className="absolute top-10 left-0 text-[#bbb]">
        <svg viewBox="0 0 6 12" className="h-3 w-1.5" aria-hidden="true"><path d="M1 2l3 4-3 4" fill="none" stroke="currentColor" /></svg>
      </button>
      <button aria-label="サイドバーを開く" className="absolute top-10 right-0 text-[#bbb]">
        <svg viewBox="0 0 6 12" className="h-3 w-1.5" aria-hidden="true"><path d="M5 2L2 6l3 4" fill="none" stroke="currentColor" /></svg>
      </button>
      <div className="absolute top-[37px] right-[11px]"><AxisGizmo /></div>
      <div className="absolute top-[117px] right-2 flex flex-col gap-0.5">
        {NAV_BUTTONS.map(([n, l]) => (
          <button key={n} aria-label={l} className="flex size-7 items-center justify-center rounded-full bg-[#6e6f70] text-[#2f3133]">
            <Icon name={n} />
          </button>
        ))}
      </div>
      <TransformCard
        number="7"
        accent="orange"
        className="top-[300px] left-[57px]"
        sections={[
          { title: "位置", values: ["2 m", "0 m", "0 m"], mark: true },
          { title: "回転", values: ["0°", "0°", "0°"] },
          { title: "スケール", values: ["4.000", "2.000", "3.000"], mark: true },
          { title: "寸法", values: ["8 m", "4 m", "6 m"], wide: true },
        ]}
      />
      <TransformCard
        number="8"
        accent="blue"
        className="top-[288px] right-[33px]"
        sections={[
          { title: "位置", values: ["4 m", "0 m", "1.5 m"], mark: true },
          { title: "回転", values: ["0°", "0°", "0°"] },
          { title: "スケール", values: ["0.200", "0.200", "0.200"], mark: true },
          { title: "寸法", values: ["0.38 m", "0.4 m", "0.4 m"], wide: true },
        ]}
      />
    </main>
  );
}

/* ------------------------------------------------------------------ */
/* Timeline                                                            */
/* ------------------------------------------------------------------ */

const FRAMES = Array.from({ length: 25 }, (_, i) => (i + 1) * 10);

function Timeline() {
  return (
    <section className="relative mt-px bg-[#232323]">
      <div className="flex h-[27px] items-center pr-1.5 pl-2 text-[#d6d6d6]">
        <div className="flex flex-1 items-center">
          <EditorButton icon="clock" label="エディタータイプ" />
          <div className="ml-1.5 flex h-[19px] overflow-hidden rounded">
            <button className={`flex w-[46px] items-center justify-between pl-1.5 ${BLUE}`}>再生<Icon name="chevron" className="size-3.5" /></button>
            <button className={`flex w-20 items-center justify-between border-l border-[#1c2d3f] pl-1.5 whitespace-nowrap ${BLUE}`}>キーイング<Icon name="chevron" className="size-3.5" /></button>
          </div>
          <button className="ml-[9px]">ビュー</button>
          <button className="ml-3.5">マーカー</button>
        </div>
        <div className="mr-[22px] flex items-center">
          <div className="flex h-[19px] overflow-hidden rounded">
            <button aria-label="自動キー挿入" className="flex w-[18px] items-center justify-center bg-[#6a6a6a] text-white"><Icon name="record" /></button>
            <button aria-label="自動キー挿入の設定" className="flex w-5 items-center justify-center bg-[#2b3946] text-[#51606e]"><Icon name="chevron" className="size-3.5" /></button>
          </div>
          <div className="ml-1.5 flex h-[19px] overflow-hidden rounded border border-black bg-[#2c3c4b] text-[#e8eef4]">
            {["first", "prevKey", "playBack", "play", "nextKey", "last"].map((n, i) => (
              <button key={n} aria-label={n} className={`flex w-5 items-center justify-center ${i ? "border-l border-black" : ""}`}>
                <Icon name={n} className={i === 2 || i === 3 ? "size-4" : "size-3.5"} />
              </button>
            ))}
          </div>
        </div>
        <div className="flex flex-1 justify-end gap-[7px]">
          <input aria-label="現在のフレーム" defaultValue="1" className={`h-[19px] w-[74px] rounded border border-black text-center ${FIELD}`} />
          <div className="flex h-[19px] overflow-hidden rounded border border-black">
            <button aria-label="プレビュー範囲" className="flex w-[18px] items-center justify-center bg-[#6a6a6a] text-[#e8e8e8]"><Icon name="stopwatch" /></button>
            <label className="flex w-[87px] items-center border-l border-black bg-[#2b3844] pr-3 pl-[15px] whitespace-nowrap text-[#8fbce6]">
              開始<input defaultValue="1" className={`w-full text-right ${FIELD}`} />
            </label>
            <label className="flex w-[87px] items-center border-l border-black bg-[#2b3844] pr-3 pl-[15px] whitespace-nowrap text-[#8fbce6]">
              終了<input defaultValue="150" className={`w-full text-right ${FIELD}`} />
            </label>
          </div>
        </div>
      </div>
      <div className="relative bg-[#2c2d2e] pr-[25px] pl-[67px]">
        <ol className="flex h-6 items-center text-center font-[DejaVu_Sans,sans-serif] text-black">
          {FRAMES.map((f) => (
            <li key={f} className="min-w-0 flex-1">{f}</li>
          ))}
        </ol>
        <span className="absolute top-[3px] left-9 flex h-[17px] w-6 items-center justify-center rounded bg-[#8b997f] font-[DejaVu_Sans,sans-serif] text-white">1</span>
        <span className="absolute top-5 left-[47px] h-1 w-0.5 bg-[#8b997f]" />
      </div>
      <div className="h-3 bg-[#232a2f] px-2 pt-px">
        <div className="flex h-[9px] items-center justify-between rounded-full border border-[#0c0c0c] bg-[#555] px-px">
          <span className="size-[5px] rounded-full bg-[#111]" />
          <span className="size-[5px] rounded-full bg-[#111]" />
        </div>
      </div>
      <svg viewBox="0 0 6 12" className="absolute bottom-2.5 left-0 h-3 w-1.5 text-[#aaa]" aria-hidden="true"><path d="M1 2l3 4-3 4" fill="none" stroke="currentColor" /></svg>
      <svg viewBox="0 0 6 12" className="absolute right-0 bottom-2.5 h-3 w-1.5 text-[#aaa]" aria-hidden="true"><path d="M5 2L2 6l3 4" fill="none" stroke="currentColor" /></svg>
    </section>
  );
}

/* ------------------------------------------------------------------ */
/* Outliner                                                            */
/* ------------------------------------------------------------------ */

type Item = { name: string; icon: string; iconColor: string; nameColor: string; rowColor: string; data: [string, string][]; hidden?: boolean; box?: boolean };

const ITEMS: Item[] = [
  { name: "Camera", icon: "movie", iconColor: "text-[#8a5a3c]", nameColor: "text-[#4d6172]", rowColor: "bg-[#181818]", data: [["cameraData", "text-[#5b9c85] bg-[#2c4a4c]"]], hidden: true },
  { name: "Icosphere", icon: "meshTri", iconColor: "text-[#ee9a5f]", nameColor: "text-[#dd7a2b]", rowColor: "bg-[#31485c]", data: [["wrenchLine", "text-[#7d9fd8]"], ["mesh", "text-[#66cf84]"]] },
  { name: "Light", icon: "light", iconColor: "text-[#8a5a3c]", nameColor: "text-[#4d6172]", rowColor: "bg-[#181818]", data: [["lightData", "text-[#4d7a4a]"]], hidden: true },
  { name: "Liquid Domain", icon: "meshTri", iconColor: "text-[#ee9a5f]", nameColor: "text-[#f5b56b]", rowColor: "bg-[#3b568c]", data: [["fluid", "text-[#7d9fd8]"]], box: true },
];

function RowToggles({ hidden, name }: { hidden?: boolean; name: string }) {
  return (
    <div className="flex items-center gap-1.5 text-[#eef2f6]">
      <button aria-label={`${name}: 選択可否`}><Icon name="toggleArrow" className="size-3.5" /></button>
      <button aria-label={`${name}: 表示`} className={hidden ? "text-[#9aa0a6]" : ""}><Icon name={hidden ? "eyeClosed" : "eye"} className="size-3.5" /></button>
      <button aria-label={`${name}: レンダー`}><Icon name="photo" className="size-3.5" /></button>
    </div>
  );
}

function Outliner() {
  return (
    <section>
      <div className="flex h-6 items-center overflow-hidden rounded-t-md bg-[#2e2e2e] pl-[9px]">
        <EditorButton icon="outliner" label="エディタータイプ" />
        <span className="w-1.5" />
        <EditorButton icon="layers" label="表示モード" />
        <Search label="アウトライナーを検索" className="ml-4 w-[111px]" />
        <span className="flex-1" />
        <EditorButton icon="filter" label="フィルター" />
        <button aria-label="新規コレクション" className="ml-1.5 flex h-5 w-[17px] items-center rounded-l border border-r-0 border-black bg-[#2b2b2b] text-[#c8c8c8]">
          <Icon name="newCollection" />
        </button>
      </div>
      <ul className="text-[#7fa9cf]">
        <li className="flex h-[22px] items-center bg-[#181818] pt-0.5 pl-[23px]">
          <Icon name="collection" className="size-[15px] text-[#dcdcdc]" />
          <span className="ml-1.5">シーンコレクション</span>
        </li>
        <li className="flex h-5 items-center bg-[#1e1e1e] pr-2.5 pl-6">
          <button aria-label="Collection を閉じる" className="w-3 text-[8px] text-[#4c8fd0]">▼</button>
          <span className="ml-1 flex size-[19px] items-center justify-center rounded bg-[#34434f] text-[#e4e4e4]"><Icon name="collection" className="size-[15px]" /></span>
          <span className="ml-[5px] flex-1">Collection</span>
          <span className="relative mr-1.5 flex size-3.5 items-center justify-center">
            <input type="checkbox" defaultChecked aria-label="Collection を有効化" className="size-[11px] appearance-none rounded-[1px] bg-white" />
            <svg viewBox="0 0 12 12" className="pointer-events-none absolute size-3" aria-hidden="true"><path d="M2.500 6l2.500 2.500 4.500-5" fill="none" stroke="#1e1e1e" strokeWidth="1.700" /></svg>
          </span>
          <RowToggles name="Collection" />
        </li>
        {ITEMS.map((it) => (
          <li key={it.name} className={`flex h-5 items-center pr-2.5 pl-[29px] ${it.rowColor}`}>
            <span className="h-full w-px bg-[#46505a]" />
            <button aria-label={`${it.name} を開く`} className={`ml-3.5 w-3 text-[8px] ${it.hidden ? "text-[#3e6284]" : "text-[#5aa0e0]"}`}>▶</button>
            <span className={`ml-1 flex size-[19px] items-center justify-center rounded ${it.iconColor} ${it.box ? "bg-[#4c6792]" : ""}`}><Icon name={it.icon} className="size-[15px]" /></span>
            <span className={`ml-[5px] whitespace-nowrap ${it.nameColor}`}>{it.name}</span>
            <span className="ml-[18px] flex flex-1 gap-0.5">
              {it.data.map(([n, c]) => (
                <span key={n} className={`flex size-[18px] items-center justify-center rounded ${c}`}><Icon name={n} className="size-[15px]" /></span>
              ))}
            </span>
            <RowToggles hidden={it.hidden} name={it.name} />
          </li>
        ))}
        {[0, 1, 2, 3, 4, 5].map((i) => (
          <li key={i} className={`h-5 ${i % 2 ? "bg-[#1e1e1e]" : "bg-[#181818]"}`} />
        ))}
      </ul>
    </section>
  );
}

/* ------------------------------------------------------------------ */
/* Properties                                                          */
/* ------------------------------------------------------------------ */

const NAV_TABS: { icon: string; label: string; color: string; gap?: boolean; active?: boolean }[] = [
  { icon: "tool", label: "ツール", color: "text-[#cfcfcf]" },
  { icon: "render", label: "レンダー", color: "text-[#b8b8b8]", gap: true },
  { icon: "output", label: "出力", color: "text-[#b8b8b8]" },
  { icon: "layers", label: "ビューレイヤー", color: "text-[#b8b8b8]" },
  { icon: "scene", label: "シーン", color: "text-[#b8b8b8]" },
  { icon: "world", label: "ワールド", color: "text-[#d65059]" },
  { icon: "collectionLine", label: "コレクション", color: "text-[#c8c8c8]", gap: true },
  { icon: "object", label: "オブジェクト", color: "text-[#e8985a]", gap: true, active: true },
  { icon: "wrench", label: "モディファイアー", color: "text-[#6f97d8]" },
  { icon: "particles", label: "パーティクル", color: "text-[#7ba4dc]" },
  { icon: "physics", label: "物理演算", color: "text-[#7ba4dc]" },
  { icon: "constraint", label: "コンストレイント", color: "text-[#7ba4dc]" },
  { icon: "mesh", label: "データ", color: "text-[#66cf84]" },
  { icon: "materialBall", label: "マテリアル", color: "text-[#e05a62]" },
  { icon: "checker", label: "テクスチャ", color: "text-[#d65059]", gap: true },
];

function Grip() {
  return (
    <svg viewBox="0 0 12 6" className="ml-auto h-1.5 w-3 text-[#555]" aria-hidden="true">
      <path d="M0 1.500h1M3 1.500h1M6 1.500h1M9 1.500h1M0 4.500h1M3 4.500h1M6 4.500h1M9 4.500h1" stroke="currentColor" />
    </svg>
  );
}

function PropGroup({ name, values }: { name: string; values: [string, string, string] }) {
  return (
    <div>
      {values.map((v, i) => (
        <div key={i} className="flex h-5 items-center">
          <label htmlFor={`${name}-${i}`} className="mr-2.5 w-[86px] shrink-0 text-right whitespace-nowrap text-[#d8d8d8]">
            {i === 0 ? `${name} ` : ""}{"XYZ"[i]}
          </label>
          <input
            id={`${name}-${i}`}
            defaultValue={v}
            className={`h-5 w-0 flex-1 border-x border-[#0a0f14] text-center ${FIELD} ${i === 0 ? "rounded-tl border-t" : "border-t"} ${i === 2 ? "rounded-bl border-b" : ""}`}
          />
          <button aria-label={`${name} ${"XYZ"[i]} をロック`} className="ml-0.5 text-[#a8a8a8]"><Icon name="unlock" /></button>
          <button aria-label={`${name} ${"XYZ"[i]} をアニメート`} className="ml-1 flex w-4 justify-center"><span className="size-1 rounded-full bg-[#dcdcdc]" /></button>
        </div>
      ))}
    </div>
  );
}

const PANELS = ["関係", "コレクション", "インスタンス化", "モーションパス", "可視性", "ビューポート表示", "ラインアート", "カスタムプロパティ"];

function Properties() {
  return (
    <section className="flex flex-1 flex-col bg-[#1d1d1d]">
      <div className="flex h-6 items-center rounded-t-md bg-[#2e2e2e] pr-2 pl-[9px]">
        <EditorButton icon="properties" label="エディタータイプ" />
        <Search label="プロパティを検索" className="ml-[38px] w-[111px]" />
        <button aria-label="オプション" className={`ml-auto flex h-[19px] w-[18px] items-center justify-center rounded-sm ${BLUE}`}><Icon name="chevron" className="size-3.5" /></button>
      </div>
      <div className="flex flex-1">
        <nav className="flex w-7 shrink-0 flex-col gap-0.5 bg-[#1a1a1a] pt-2.5 pl-0.5">
          {NAV_TABS.map((t) => (
            <button
              key={t.icon}
              aria-label={t.label}
              className={`flex h-[26px] shrink-0 items-center justify-center rounded-l ${t.color} ${t.gap ? "mt-2" : ""} ${t.active ? "bg-[#444]" : "bg-[#272727]"}`}
            >
              <Icon name={t.icon} className="size-[15px]" />
            </button>
          ))}
        </nav>
        <div className="min-w-0 flex-1">
          <div className="h-[60px] bg-[#424242] px-2">
            <div className="flex h-3 items-center pl-0.5 text-[#dcdcdc]">
              <Icon name="object" className="size-[15px]" />
              <span className="ml-2.5 leading-3">Liquid Domain</span>
              <Icon name="pin" className="ml-auto size-3.5 text-[#a0a0a0]" />
            </div>
            <div className="mt-5 flex h-5 overflow-hidden rounded border border-[#16202a]">
              <button aria-label="オブジェクトを選択" className={`flex w-[30px] items-center justify-center ${BLUE}`}>
                <Icon name="object" className="size-[15px] text-white" />
                <Icon name="chevron" className="size-3" />
              </button>
              <input aria-label="オブジェクト名" defaultValue="Liquid Domain" className="w-0 flex-1 border-l border-[#16202a] bg-[#546f86] pl-[7px] text-[#dbe9f7] outline-none" />
            </div>
          </div>
          <h2 className="flex h-6 items-center bg-[#1d1d1d] pt-px pr-2 pl-2 text-xs text-[#e4e4e4]">
            <span className="mr-1.5 text-[9px] text-[#a8a8a8]">▼</span>
            トランスフォーム
            <Grip />
          </h2>
          <div className="flex flex-col gap-[5px] bg-[#28313b] pt-2 pr-[11px]">
            <PropGroup name="位置" values={["2 m", "0 m", "0 m"]} />
            <PropGroup name="回転" values={["0°", "0°", "0°"]} />
            <div className="flex h-5 items-center">
              <span className="mr-2.5 w-[86px] shrink-0 text-right text-[#d8d8d8]">モード</span>
              <Dropdown label="モード" value="XYZ オイラー角" className="h-[19px] w-0 flex-1 rounded-sm pl-[7px] whitespace-nowrap" />
              <button aria-label="モードをアニメート" className="ml-[22px] flex w-4 justify-center"><span className="size-1 rounded-full bg-[#dcdcdc]" /></button>
            </div>
            <PropGroup name="スケール" values={["4.000", "2.000", "3.000"]} />
            <button className="-mt-1 flex h-[31px] items-center pt-2 pl-[22px] text-[#d8d8d8]">
              <span className="mr-[7px] text-[8px] text-[#a8a8a8]">▶</span>
              デルタトランスフォーム
            </button>
          </div>
          {PANELS.map((p) => (
            <button key={p} className="flex h-6 w-full items-center pt-px pr-2 pl-2 text-xs text-[#dcdcdc]">
              <span className="mr-1.5 text-[8px] text-[#a8a8a8]">▶</span>
              {p}
              <Grip />
            </button>
          ))}
        </div>
      </div>
    </section>
  );
}

/* ------------------------------------------------------------------ */
/* Status bar                                                          */
/* ------------------------------------------------------------------ */

const STATS = ["Collection", "Liquid Domain", "頂点:50", "面:86", "三角面:92", "オブジェクト:2/2", "2.93.4"];

function StatusBar() {
  return (
    <footer className="flex h-[19px] items-center bg-[#303030] pl-2.5 whitespace-nowrap text-[#b4b4b4]">
      <div className="flex w-[235px] items-center">
        <Icon name="mouseLeft" /><span className="ml-2">選択</span>
        <Icon name="mouseDrag" className="ml-2.5 size-4" /><span className="ml-2">ボックス選択</span>
      </div>
      <div className="flex w-[236px] items-center"><Icon name="mouseMiddle" /><span className="ml-2.5">ビューを回転</span></div>
      <div className="flex flex-1 items-center"><Icon name="mouseRight" /><span className="ml-2">オブジェクトコンテクストメニュー</span></div>
      <p className="pr-2">
        {STATS.map((s, i) => (
          <React.Fragment key={s}>
            {i > 0 && <Bar />}
            {s}
          </React.Fragment>
        ))}
      </p>
    </footer>
  );
}

export default function App() {
  return (
    <div className="flex min-h-screen flex-col bg-[#a69d90] pr-0.5 pb-0.5 pl-px font-[Noto_Sans,Noto_Sans_CJK_JP,sans-serif] text-[11px]">
      <TitleBar />
      <TopBar />
      <div className="flex flex-1 bg-[#1c1c1c] pl-px">
        <div className="flex min-w-0 flex-1 flex-col">
          <ToolHeader />
          <Viewport />
          <Timeline />
        </div>
        <aside className="ml-[3px] flex w-[274px] shrink-0 flex-col">
          <Outliner />
          <Properties />
        </aside>
      </div>
      <StatusBar />
    </div>
  );
}
